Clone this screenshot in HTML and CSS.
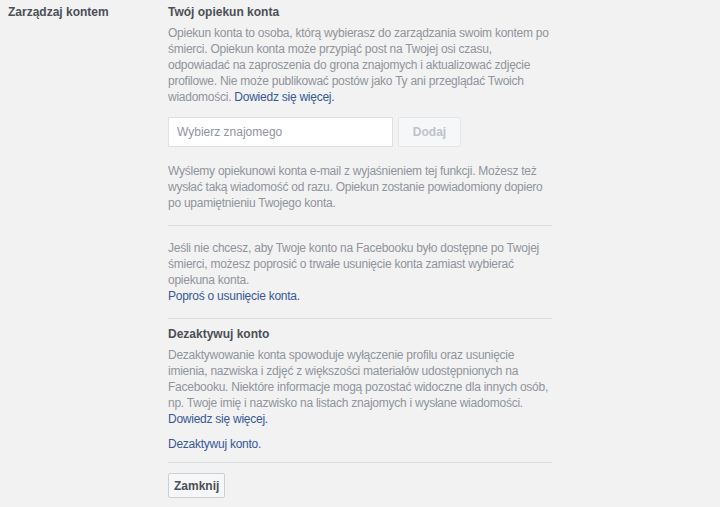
FILE: index.html
```html
<!DOCTYPE html>
<html lang="pl">

<head>
    <meta charset="UTF-8">
    <meta name="viewport" content="width=device-width, initial-scale=1.0">
    <title>Zarządzaj kontem</title>
    <link rel="stylesheet" href="styles.css">
</head>

<body>
    <div class="settingsRow">
        <div class="settingsLabel">Zarządzaj kontem</div>

        <div class="settingsContent">
            <div class="section">
                <h3 class="sectionTitle">Twój opiekun konta</h3>
                <p class="desc">Opiekun konta to osoba, którą wybierasz do zarządzania swoim kontem po śmierci. Opiekun konta może przypiąć post na Twojej osi czasu, odpowiadać na zaproszenia do grona znajomych i aktualizować zdjęcie profilowe. Nie może publikować postów jako Ty ani przeglądać Twoich wiadomości. <a href="#">Dowiedz się więcej.</a></p>

                <div class="pickRow">
                    <input class="pickInput" type="text" placeholder="Wybierz znajomego">
                    <button class="btn btnDisabled" type="button">Dodaj</button>
                </div>

                <p class="desc note">Wyślemy opiekunowi konta e-mail z wyjaśnieniem tej funkcji. Możesz też wysłać taką wiadomość od razu. Opiekun zostanie powiadomiony dopiero po upamiętnieniu Twojego konta.</p>
            </div>

            <div class="section sectionBorder">
                <p class="desc">Jeśli nie chcesz, aby Twoje konto na Facebooku było dostępne po Twojej śmierci, możesz poprosić o trwałe usunięcie konta zamiast wybierać opiekuna konta.<br><a href="#">Poproś o usunięcie konta.</a></p>
            </div>

            <div class="section sectionBorder deactivate">
                <h3 class="sectionTitle">Dezaktywuj konto</h3>
                <p class="desc">Dezaktywowanie konta spowoduje wyłączenie profilu oraz usunięcie imienia, nazwiska i zdjęć z większości materiałów udostępnionych na Facebooku. Niektóre informacje mogą pozostać widoczne dla innych osób, np. Twoje imię i nazwisko na listach znajomych i wysłane wiadomości.<br><a href="#">Dowiedz się więcej.</a></p>
                <p class="desc linkLine"><a href="#">Dezaktywuj konto.</a></p>
            </div>

            <div class="section sectionBorder footerBtns">
                <button class="btn" type="button">Zamknij</button>
            </div>
        </div>
    </div>
</body>

</html>
```

FILE: styles.css
```css
* {
    margin: 0;
    padding: 0;
    box-sizing: border-box;
}

html,
body {
    width: 100%;
    height: 100%;
}

body {
    background: #f2f2f2;
    font-family: "Liberation Sans", Arial, sans-serif;
    font-size: 12px;
    line-height: 16px;
    color: #90949c;
}

a {
    color: #365899;
    text-decoration: none;
}

.settingsRow {
    display: flex;
    padding: 4px 0 0 8px;
}

.settingsLabel {
    width: 160px;
    flex-shrink: 0;
    font-weight: bold;
    color: #4b4f56;
}

.settingsContent {
    width: 384px;
}

.sectionTitle {
    font-size: 12px;
    font-weight: bold;
    color: #4b4f56;
    margin-bottom: 5px;
}

.desc {
    color: #90949c;
    letter-spacing: -0.25px;
}

.pickRow {
    display: flex;
    gap: 5px;
    margin: 12px 0 16px;
}

.pickInput {
    width: 225px;
    height: 30px;
    border: solid 1px #dddfe2;
    background: #fff;
    padding: 0 8px;
    font-family: inherit;
    font-size: 12px;
    color: #1d2129;
    outline: none;
}

.pickInput::placeholder {
    color: #90949c;
}

.btn {
    height: 25px;
    padding: 0 5px;
    border: solid 1px #ccd0d5;
    border-radius: 2px;
    background: #f6f7f9;
    font-family: inherit;
    font-size: 12px;
    font-weight: bold;
    color: #4b4f56;
}

.btnDisabled {
    width: 63px;
    height: 30px;
    border-color: #e4e6e9;
    color: #bec3c9;
}

.section {
    padding-bottom: 14px;
}

.sectionBorder {
    border-top: solid 1px #dadde1;
    padding-top: 14px;
}

.deactivate {
    padding-top: 7px;
    padding-bottom: 10px;
}

.linkLine {
    margin-top: 9px;
}

.footerBtns {
    padding-top: 10px;
}
```
